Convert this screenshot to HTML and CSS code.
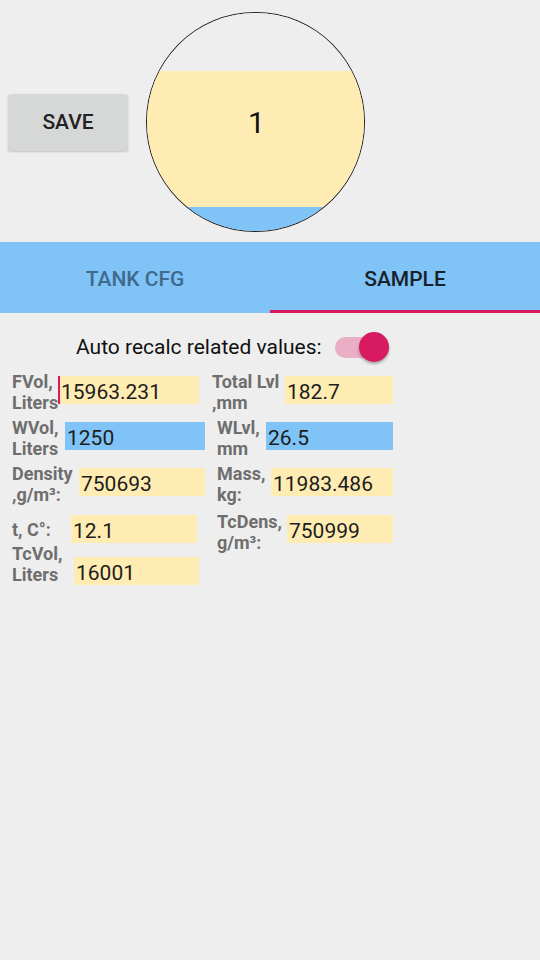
FILE: index.html
```html
<!DOCTYPE html>
<html>
<head>
<meta charset="utf-8">
<link rel="stylesheet" href="styles.css">
</head>
<body>
<header class="top">
  <button class="save">SAVE</button>
  <div class="tank">
    <div class="tank-fill">
      <div class="tank-empty"></div>
      <div class="tank-fuel"></div>
      <div class="tank-water"></div>
    </div>
    <div class="tank-num">1</div>
  </div>
</header>
<nav class="tabs">
  <div class="tab">TANK CFG</div>
  <div class="tab active">SAMPLE</div>
</nav>
<div class="recalc">
  <span class="recalc-text">Auto recalc related values:</span>
  <span class="switch"><span class="track"></span><span class="thumb"></span></span>
</div>
<main class="fields">
  <div class="col col-left">
    <div class="row r-fvol">
      <div class="lbl">FVol,<br>Liters</div>
      <input class="val fuel focused" type="text" value="15963.231">
    </div>
    <div class="row r-wvol">
      <div class="lbl">WVol,<br>Liters</div>
      <input class="val water" type="text" value="1250">
    </div>
    <div class="row r-dens">
      <div class="lbl">Density<br>,g/m³:</div>
      <input class="val fuel" type="text" value="750693">
    </div>
    <div class="row r-temp">
      <div class="lbl single">t, C°:</div>
      <input class="val fuel" type="text" value="12.1">
    </div>
    <div class="row r-tcvol">
      <div class="lbl">TcVol,<br>Liters</div>
      <input class="val fuel" type="text" value="16001">
    </div>
  </div>
  <div class="col col-right">
    <div class="row r-tlvl">
      <div class="lbl">Total Lvl<br>,mm</div>
      <input class="val fuel" type="text" value="182.7">
    </div>
    <div class="row r-wlvl">
      <div class="lbl">WLvl,<br>mm</div>
      <input class="val water" type="text" value="26.5">
    </div>
    <div class="row r-mass">
      <div class="lbl">Mass,<br>kg:</div>
      <input class="val fuel" type="text" value="11983.486">
    </div>
    <div class="row r-tcdens">
      <div class="lbl">TcDens,<br>g/m³:</div>
      <input class="val fuel" type="text" value="750999">
    </div>
  </div>
</main>
</body>
</html>
```
FILE: styles.css
```css
* { box-sizing: border-box; }
html, body { margin: 0; padding: 0; }
body {
  width: 540px;
  height: 960px;
  background: #eeeeee;
  font-family: Roboto, "Noto Sans", sans-serif;
  color: #212121;
  overflow: hidden;
}

.top {
  height: 242px;
  display: flex;
  align-items: center;
  padding: 0 0 0 8px;
}
.save {
  width: 120px;
  height: 57px;
  border: none;
  border-radius: 3px;
  background: #d6d7d7;
  box-shadow: 0 1px 2px rgba(0,0,0,0.18);
  font-family: Roboto, sans-serif;
  font-weight: 500;
  font-size: 21px;
  color: #222222;
  padding: 0;
  margin-top: 2px;
}
.tank {
  margin-left: 18px;
  width: 219px;
  height: 220px;
  border: 1px solid #1e1e1e;
  border-radius: 50%;
  overflow: hidden;
  display: grid;
  margin-top: 1px;
}
.tank-fill {
  grid-area: 1 / 1;
  display: flex;
  flex-direction: column;
}
.tank-empty { height: 58px; background: #eeeeee; }
.tank-fuel { height: 136px; background: #ffecb3; }
.tank-water { flex: 1; background: #7fc3f7; }
.tank-num {
  grid-area: 1 / 1;
  align-self: center;
  justify-self: center;
  font-size: 30px;
  line-height: 36px;
  color: #111111;
  margin-left: 2px;
  margin-top: 2px;
}

.tabs {
  display: flex;
  height: 71px;
  background: #7fc3f7;
}
.tab {
  flex: 1;
  display: flex;
  align-items: center;
  justify-content: center;
  font-weight: 500;
  font-size: 21px;
  color: #41698b;
  padding-top: 2px;
}
.tab.active {
  color: #1a2229;
  box-shadow: inset 0 -3px 0 #d81b60;
}

.recalc {
  display: flex;
  align-items: center;
  height: 48px;
  margin-top: 10px;
  padding-left: 76px;
}
.recalc-text {
  font-size: 21px;
  color: #111111;
}
.switch {
  position: relative;
  width: 56px;
  height: 30px;
  margin-left: 13px;
  display: flex;
  align-items: center;
}
.track {
  width: 54px;
  height: 21px;
  border-radius: 11px;
  background: #eaafc5;
}
.thumb {
  position: absolute;
  left: 24px;
  top: 0;
  width: 30px;
  height: 30px;
  border-radius: 50%;
  background: #d81b60;
  box-shadow: 0 2px 3px rgba(0,0,0,0.3);
}

.fields {
  display: flex;
  padding-left: 12px;
}
.col { display: flex; flex-direction: column; }
.col-left { width: 200px; }
.col-right { width: 200px; }

.row {
  display: flex;
  align-items: flex-start;
  margin-bottom: 4px;
}
.lbl {
  font-weight: 700;
  font-size: 18px;
  line-height: 21px;
  color: #6e6e6e;
  white-space: nowrap;
  flex: none;
}
.val {
  flex: none;
  height: 28px;
  margin-top: 5px;
  border: none;
  padding: 4px 0 0 2px;
  font-family: Roboto, sans-serif;
  font-size: 21px;
  color: #1c1c1c;
  outline: none;
}
.val.fuel { background: #ffecb3; }
.val.water { background: #7fc3f7; }
.val.focused {
  border-left: 2px solid #d81b60;
  padding-left: 1px;
}

/* left column */
.r-fvol .lbl { width: 46px; }
.r-fvol .val { width: 141px; }
.r-wvol .lbl { width: 53px; }
.r-wvol .val { width: 140px; }
.r-dens .lbl { width: 67px; }
.r-dens .val { width: 126px; }
.r-temp { margin-bottom: 0; }
.r-temp .lbl { width: 59px; margin-top: 10px; }
.r-temp .val { width: 126px; margin-top: 6px; }
.r-tcvol .lbl { width: 62px; }
.r-tcvol .val { width: 125px; margin-top: 14px; }

/* right column */
.r-tlvl .lbl { width: 73px; }
.r-tlvl .val { width: 108px; }
.r-wlvl .lbl { width: 54px; padding-left: 5px; }
.r-wlvl .val { width: 127px; }
.r-mass { margin-bottom: 6px; }
.r-mass .lbl { width: 59px; padding-left: 5px; }
.r-mass .val { width: 122px; }
.r-tcdens .lbl { width: 75px; padding-left: 5px; }
.r-tcdens .val { width: 106px; margin-top: 4px; }
```
